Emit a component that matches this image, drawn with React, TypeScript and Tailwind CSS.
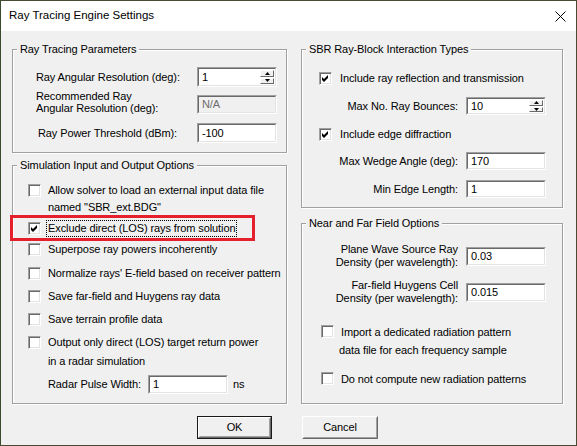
import type { ReactNode } from 'react';

function GroupBox({
  title,
  className = '',
  children,
}: {
  title: string;
  className?: string;
  children: ReactNode;
}) {
  return (
    <div
      className={`relative flex flex-col border border-[#a0a0a0] shadow-[1px_1px_0_#fff,inset_1px_1px_0_#fff] ${className}`}
    >
      <span className="absolute -top-[7px] left-[4px] bg-[#f0f0f0] px-[3px] leading-[13px]">
        {title}
      </span>
      {children}
    </div>
  );
}

function Spinner() {
  return (
    <div className="flex h-full w-[15px] flex-col gap-[1px] py-[1px] pr-[1px]">
      {['up', 'down'].map((dir) => (
        <div
          key={dir}
          className="flex flex-1 items-center justify-center border border-t-white border-l-white border-r-[#696969] border-b-[#696969] bg-[#f0f0f0]"
        >
          <svg width="5" height="3" viewBox="0 0 5 3">
            {dir === 'up' ? (
              <polygon points="2.5,0 5,3 0,3" fill="#000" />
            ) : (
              <polygon points="0,0 5,0 2.5,3" fill="#000" />
            )}
          </svg>
        </div>
      ))}
    </div>
  );
}

function Field({
  value,
  className = '',
  disabled = false,
  spin = false,
}: {
  value: string;
  className?: string;
  disabled?: boolean;
  spin?: boolean;
}) {
  return (
    <div
      className={`flex shrink-0 border border-t-[#a0a0a0] border-l-[#a0a0a0] border-r-white border-b-white ${
        disabled ? 'bg-[#f0f0f0] text-[#6d6d6d]' : 'bg-white text-black'
      } ${className}`}
    >
      <div className="flex flex-1 items-center border border-t-[#696969] border-l-[#696969] border-r-[#e3e3e3] border-b-[#e3e3e3] pl-[3px]">
        <span className="flex-1">{value}</span>
        {spin ? <Spinner /> : null}
      </div>
    </div>
  );
}

function Check({ checked = false, className = '' }: { checked?: boolean; className?: string }) {
  return (
    <span
      className={`flex h-[13px] w-[13px] shrink-0 items-center justify-center border border-t-[#a0a0a0] border-l-[#a0a0a0] border-r-white border-b-white bg-white shadow-[inset_1px_1px_0_#696969,inset_-1px_-1px_0_#e3e3e3] ${className}`}
    >
      {checked ? (
        <svg width="7" height="7" viewBox="0 0 7 7">
          <polygon points="0,2 2,4 6,0 6,3 2,7 0,5" fill="#000" />
        </svg>
      ) : null}
    </span>
  );
}

function DialogButton({ label, isDefault = false }: { label: string; isDefault?: boolean }) {
  return (
    <div
      className={`flex h-[23px] ${isDefault ? 'w-[75px] border border-[#1a1a1a]' : 'w-[76px]'}`}
    >
      <div className="flex flex-1 border border-t-white border-l-white border-r-[#696969] border-b-[#696969]">
        <div className="flex flex-1 items-center justify-center border border-t-[#f0f0f0] border-l-[#f0f0f0] border-r-[#a0a0a0] border-b-[#a0a0a0] bg-[#f0f0f0]">
          {label}
        </div>
      </div>
    </div>
  );
}

export default function App() {
  return (
    <div className="flex h-[446px] w-[577px] flex-col border border-[#4a4a32] border-l-[#3a4a2c] bg-[#f0f0f0] font-['Liberation_Sans',Arial,sans-serif] text-[11px] tracking-[-0.1px] text-black">
      {/* title bar */}
      <div className="flex h-[30px] shrink-0 items-center justify-between bg-white pl-[8px] pr-[10px]">
        <span className="text-[11.5px] leading-none tracking-normal">Ray Tracing Engine Settings</span>
        <svg width="11" height="11" viewBox="0 0 11 11" className="mt-[1px]">
          <path d="M0.5 0.5 L10.5 10.5 M10.5 0.5 L0.5 10.5" stroke="#000" strokeWidth="1" />
        </svg>
      </div>

      <div className="flex flex-1 flex-col pl-[11px] pr-[13px] pt-[18px]">
        <div className="flex gap-[14px]">
          {/* left column */}
          <div className="flex w-[275px] flex-col gap-[12px]">
            <GroupBox title="Ray Tracing Parameters" className="h-[104px] pr-[9px] pt-[17px]">
              <div className="flex items-center justify-between pl-[23px]">
                <span>Ray Angular Resolution (deg):</span>
                <Field value="1" spin className="h-[20px] w-[80px]" />
              </div>
              <div className="mt-[3px] flex items-start justify-between pl-[23px]">
                <span className="leading-[12px]">
                  Recommended Ray
                  <br />
                  Angular Resolution (deg):
                </span>
                <Field value="N/A" disabled className="mt-[5px] h-[19px] w-[80px]" />
              </div>
              <div className="mt-[9px] flex items-center justify-between pl-[25px]">
                <span>Ray Power Threshold (dBm):</span>
                <Field value="-100" className="h-[20px] w-[80px]" />
              </div>
            </GroupBox>

            <GroupBox title="Simulation Input and Output Options" className="h-[239px] pl-[15px] pt-[16px]">
              <div className="flex items-start gap-[7px] leading-[17px]">
                <Check className="mt-[2px]" />
                <span>
                  Allow solver to load an external input data file
                  <br />
                  named "SBR_ext.BDG"
                </span>
              </div>
              <div className="relative mt-[4px] flex items-start gap-[5px] leading-[17px]">
                <Check checked className="mt-[2px]" />
                <span className="border border-dotted border-black px-[1px] leading-[15px]">
                  Exclude direct (LOS) rays from solution
                </span>
                <span className="absolute -left-[18px] -top-[5px] h-[26px] w-[245px] border-[3px] border-[#e3202c]" />
              </div>
              <div className="mt-[4px] flex items-start gap-[7px] leading-[17px]">
                <Check className="mt-[2px]" />
                <span>Superpose ray powers incoherently</span>
              </div>
              <div className="mt-[7px] flex items-start gap-[7px] leading-[17px]">
                <Check className="mt-[2px]" />
                <span>Normalize rays' E-field based on receiver pattern</span>
              </div>
              <div className="mt-[6px] flex items-start gap-[7px] leading-[17px]">
                <Check className="mt-[2px]" />
                <span>Save far-field and Huygens ray data</span>
              </div>
              <div className="mt-[6px] flex items-start gap-[7px] leading-[17px]">
                <Check className="mt-[2px]" />
                <span>Save terrain profile data</span>
              </div>
              <div className="mt-[5px] flex items-start gap-[7px] leading-[19px]">
                <Check className="mt-[3px]" />
                <span>
                  Output only direct (LOS) target return power
                  <br />
                  in a radar simulation
                </span>
              </div>
              <div className="mt-[4px] flex items-center pl-[20px]">
                <span className="w-[100px]">Radar Pulse Width:</span>
                <Field value="1" className="h-[19px] w-[80px]" />
                <span className="ml-[5px]">ns</span>
              </div>
            </GroupBox>
          </div>

          {/* right column */}
          <div className="flex w-[262px] flex-col gap-[15px]">
            <GroupBox title="SBR Ray-Block Interaction Types" className="h-[159px] pl-[17px] pr-[16px] pt-[20px]">
              <div className="flex items-start gap-[8px] leading-[17px]">
                <Check checked className="mt-[2px]" />
                <span>Include ray reflection and transmission</span>
              </div>
              <div className="mt-[10px] flex items-center justify-end gap-[8px]">
                <span>Max No. Ray Bounces:</span>
                <Field value="10" spin className="h-[18px] w-[80px]" />
              </div>
              <div className="mt-[11px] flex items-start gap-[8px] leading-[17px]">
                <Check checked className="mt-[2px]" />
                <span>Include edge diffraction</span>
              </div>
              <div className="mt-[9px] flex items-center justify-end gap-[8px]">
                <span>Max Wedge Angle (deg):</span>
                <Field value="170" className="h-[18px] w-[80px]" />
              </div>
              <div className="mt-[10px] flex items-center justify-end gap-[8px]">
                <span>Min Edge Length:</span>
                <Field value="1" className="h-[18px] w-[80px]" />
              </div>
            </GroupBox>

            <GroupBox title="Near and Far Field Options" className="h-[181px] pl-[19px] pr-[16px] pt-[19px]">
              <div className="flex items-center justify-end gap-[8px]">
                <span className="text-right leading-[13px]">
                  Plane Wave Source Ray
                  <br />
                  Density (per wavelength):
                </span>
                <Field value="0.03" className="h-[19px] w-[80px]" />
              </div>
              <div className="mt-[10px] flex items-center justify-end gap-[8px]">
                <span className="text-right leading-[13px]">
                  Far-field Huygens Cell
                  <br />
                  Density (per wavelength):
                </span>
                <Field value="0.015" className="h-[19px] w-[80px]" />
              </div>
              <div className="mt-[18px] flex items-start gap-[7px] leading-[18px]">
                <Check className="mt-[2px]" />
                <span>
                  Import a dedicated radiation pattern
                  <br />
                  <span className="-ml-[2px]">data file for each frequency sample</span>
                </span>
              </div>
              <div className="mt-[11px] flex items-start gap-[7px] leading-[18px]">
                <Check className="mt-[2px]" />
                <span>Do not compute new radiation patterns</span>
              </div>
            </GroupBox>
          </div>
        </div>

        {/* buttons */}
        <div className="mt-[12px] flex justify-center gap-[30px]">
          <DialogButton label="OK" isDefault />
          <DialogButton label="Cancel" />
        </div>
      </div>
    </div>
  );
}
